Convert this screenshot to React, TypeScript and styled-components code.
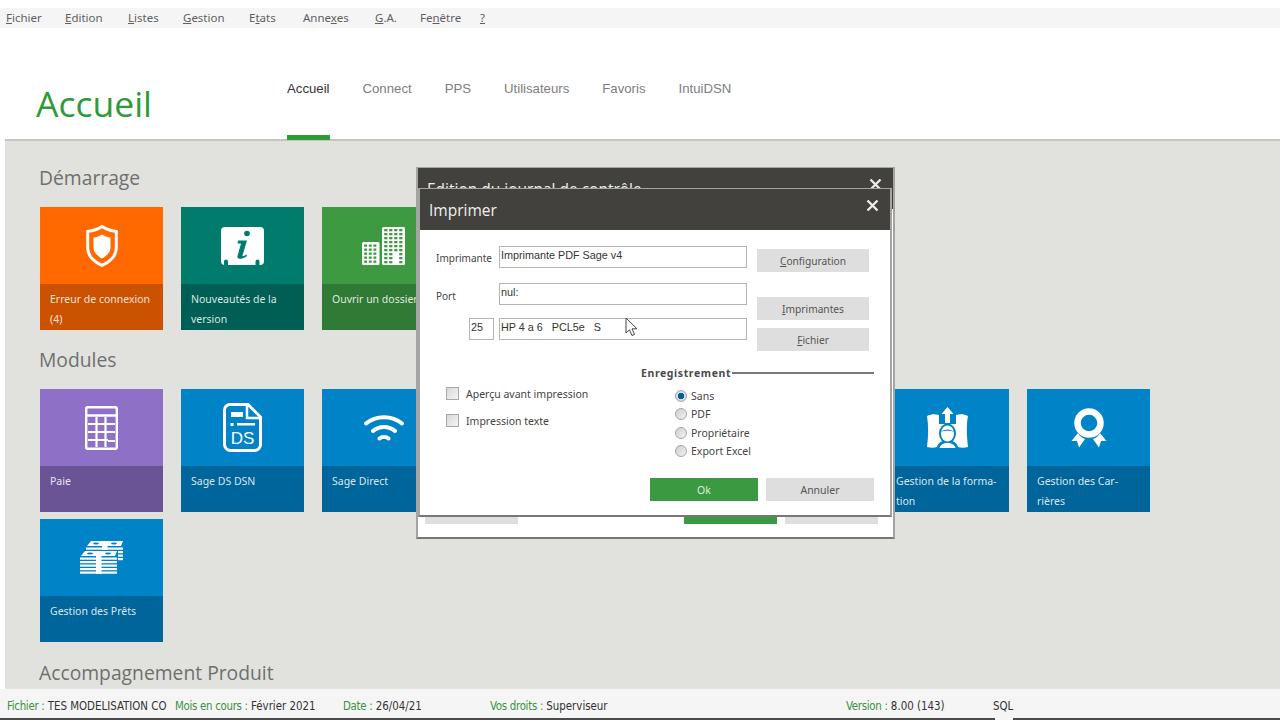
import React from 'react';
import styled, { createGlobalStyle } from 'styled-components';

const GlobalStyle = createGlobalStyle`
  html, body { margin: 0; padding: 0; background: #fff; }
  body { font-family: "Noto Sans", "Liberation Sans", sans-serif; }
  * { box-sizing: border-box; }
`;

const uiFont = '"Noto Sans", "Liberation Sans", sans-serif';
const navFont = '"Liberation Sans", Arial, sans-serif';
const titleFont = '"Open Sans", "Noto Sans", sans-serif';

const orange = { $bg: '#ff6900', $shade: '#cb5200' };
const teal = { $bg: '#007b6c', $shade: '#005f55' };
const green = { $bg: '#3d9a41', $shade: '#2f7a34' };
const purple = { $bg: '#8e70c6', $shade: '#6b5496' };
const blue = { $bg: '#0083c7', $shade: '#00659b' };

const Page = styled.div`
  position: relative;
  width: 1280px;
  height: 720px;
  overflow: hidden;
  display: flex;
  flex-direction: column;
  background: #fff;
  padding-top: 8px;
`;

const MenuBar = styled.nav`
  height: 20px;
  flex: none;
  display: flex;
  align-items: center;
  padding: 0 0 2px 6px;
  background: #f5f5f5;
  font-family: ${uiFont};
  font-size: 11.5px;
  color: #5f5f5f;
`;

const MenuItem = styled.span<{ $width: number }>`
  width: ${(p) => p.$width}px;
  flex: none;
`;

const Header = styled.header`
  height: 113px;
  flex: none;
  display: flex;
  margin-left: 5px;
  border-bottom: 2px solid #c4c5c1;
`;

const Brand = styled.h1`
  width: 282px;
  margin: 0;
  padding: 55px 0 0 31px;
  font-family: ${titleFont};
  font-size: 35.5px;
  line-height: 40px;
  font-weight: 400;
  color: #2f9a38;
`;

const Tabs = styled.div`
  display: flex;
  gap: 33px;
`;

const Tab = styled.div<{ $active?: boolean }>`
  height: 112px;
  padding-top: 52px;
  margin-bottom: -1px;
  font-family: ${navFont};
  font-size: 13.2px;
  line-height: 18px;
  color: ${(p) => (p.$active ? '#333' : '#7d7d7d')};
  border-bottom: 5px solid ${(p) => (p.$active ? '#2f9a38' : 'transparent')};
`;

const Main = styled.main`
  flex: 1;
  min-height: 0;
  margin-left: 5px;
  padding-left: 35px;
  overflow: hidden;
  background: #e1e2de;
`;

const SectionTitle = styled.h2<{ $top: number }>`
  margin: ${(p) => p.$top}px 0 15px -1px;
  height: 28px;
  font-family: ${titleFont};
  font-size: 19.3px;
  line-height: 28px;
  font-weight: 400;
  color: #6f706e;
`;

const TileGrid = styled.div`
  display: grid;
  grid-template-columns: repeat(8, 123px);
  grid-auto-rows: 123px;
  column-gap: 18px;
  row-gap: 7px;
`;

const TileBox = styled.div<{ $bg: string; $shade: string }>`
  display: flex;
  flex-direction: column;
  background: ${(p) => p.$bg};
  --shade: ${(p) => p.$shade};
`;

const TileIcon = styled.div`
  height: 77px;
  flex: none;
  display: flex;
  align-items: center;
  justify-content: center;
`;

const TileCaption = styled.div`
  flex: 1;
  padding: 5px 0 0 10px;
  background: var(--shade);
  font-family: ${uiFont};
  font-size: 10.5px;
  line-height: 20px;
  color: rgba(255, 255, 255, 0.86);
  white-space: pre-line;
`;

const StatusBar = styled.footer`
  height: 31px;
  flex: none;
  display: flex;
  align-items: center;
  padding: 2px 0 0 7px;
  background: #f5f5f5;
  font-family: "DejaVu Sans Condensed", "Liberation Sans", sans-serif;
  font-size: 11.4px;
  color: #333;
`;

const StatusItem = styled.div<{ $width: number }>`
  width: ${(p) => p.$width}px;
  flex: none;
  white-space: nowrap;
`;

const StatusKey = styled.span`
  color: #3f8f46;
  letter-spacing: -0.3px;
`;

const TaskLine = styled.div`
  height: 2px;
  flex: none;
  display: flex;
  justify-content: space-between;
  margin-top: -2px;
  position: relative;
`;

const TaskSegment = styled.div<{ $width: number }>`
  width: ${(p) => p.$width}px;
  background: #4a4a4a;
`;

const Dialog = styled.div<{ $left: number; $top: number; $width: number; $height: number }>`
  position: absolute;
  left: ${(p) => p.$left}px;
  top: ${(p) => p.$top}px;
  width: ${(p) => p.$width}px;
  height: ${(p) => p.$height}px;
  display: flex;
  flex-direction: column;
  background: #fff;
  border: 2px solid #a4a4a2;
  border-top-width: 1px;
  border-bottom-color: #777775;
`;

const TitleBar = styled.div`
  height: 41px;
  flex: none;
  display: flex;
  align-items: center;
  justify-content: space-between;
  padding: 0 11px 0 9px;
  background: #43413d;
  font-family: ${titleFont};
  font-size: 15.5px;
  color: #f0f0ee;
`;

const CloseGlyph = styled.svg`
  width: 13px;
  height: 13px;
  margin-bottom: 8px;
`;

const BackFooter = styled.div`
  margin-top: auto;
  display: flex;
  padding: 0 15px 13px 7px;
  gap: 8px;
`;

const BackButton = styled.div<{ $primary?: boolean; $push?: boolean }>`
  width: 93px;
  height: 23px;
  margin-left: ${(p) => (p.$push ? 'auto' : '0')};
  background: ${(p) => (p.$primary ? '#3a9a41' : '#dedede')};
`;

const DialogBody = styled.div`
  flex: 1;
  padding: 16px 16px 0;
  font-family: ${uiFont};
  font-size: 10.5px;
  color: #444;
`;

const TopForm = styled.div`
  display: flex;
  height: 105px;
`;

const Fields = styled.div`
  width: 311px;
  display: flex;
  flex-direction: column;
`;

const FieldRow = styled.div<{ $gap?: number; $indent?: number }>`
  display: flex;
  gap: 5px;
  align-items: flex-start;
  margin-top: ${(p) => p.$gap ?? 0}px;
  padding-left: ${(p) => p.$indent ?? 0}px;
`;

const FieldLabel = styled.div<{ $drop: number }>`
  width: 58px;
  padding-top: ${(p) => p.$drop}px;
  font-size: 10px;
  line-height: 14px;
`;

const Input = styled.div<{ $width?: number }>`
  width: ${(p) => p.$width ?? 248}px;
  height: 22px;
  padding: 1px 1px;
  background: #fff;
  border: 1px solid #b4b4b4;
  font-family: ${navFont};
  font-size: 10.8px;
  line-height: 14px;
  color: #333;
  white-space: pre;
`;

const SideButtons = styled.div`
  margin-left: 10px;
  width: 112px;
  padding-top: 3px;
  display: flex;
  flex-direction: column;
`;

const GreyButton = styled.div<{ $gap?: number }>`
  height: 23px;
  margin-top: ${(p) => p.$gap ?? 0}px;
  display: flex;
  align-items: center;
  justify-content: center;
  background: #dedede;
  color: #555;
  font-size: 10.2px;
`;

const Lower = styled.div`
  display: flex;
  margin-top: 15px;
`;

const OptionsColumn = styled.div`
  width: 205px;
  padding: 21px 0 0 10px;
  display: flex;
  flex-direction: column;
  gap: 14px;
`;

const CheckRow = styled.div`
  display: flex;
  align-items: center;
  gap: 7px;
  height: 13px;
  font-size: 10.5px;
`;

const CheckBox = styled.span`
  width: 13px;
  height: 13px;
  flex: none;
  border: 1px solid #a8a8a8;
  background: linear-gradient(135deg, #d8d8d8, #f4f4f4);
`;

const SaveColumn = styled.div`
  width: 233px;
`;

const Legend = styled.div`
  display: flex;
  align-items: center;
  gap: 1px;
  height: 14px;
  font-size: 10.5px;
  font-weight: 700;
  letter-spacing: 0.6px;
  color: #4a4a4a;
  &::after {
    content: '';
    flex: 1;
    height: 1.5px;
    background: #777;
  }
`;

const RadioGroup = styled.div`
  margin: 7px 0 0 34px;
`;

const RadioRow = styled.div`
  height: 18.33px;
  display: flex;
  align-items: center;
  gap: 4px;
  font-size: 10.5px;
`;

const RadioDot = styled.span<{ $on?: boolean }>`
  width: 12px;
  height: 12px;
  flex: none;
  border-radius: 50%;
  border: 1px solid #a6a6a6;
  background: ${(p) =>
    p.$on
      ? 'radial-gradient(circle, #0b5f8c 0 3px, #cfe0ea 3.5px)'
      : 'linear-gradient(135deg, #cfcfcf, #f2f2f2)'};
`;

const Actions = styled.div`
  display: flex;
  justify-content: flex-end;
  gap: 8px;
  margin-top: 18px;
`;

const ActionButton = styled.div<{ $primary?: boolean }>`
  width: 108px;
  height: 23px;
  display: flex;
  align-items: center;
  justify-content: center;
  background: ${(p) => (p.$primary ? '#3a9a41' : '#dedede')};
  color: ${(p) => (p.$primary ? '#d9efd9' : '#555')};
  font-size: 10.5px;
`;

const Pointer = styled.svg`
  position: absolute;
  left: 625px;
  top: 317px;
  width: 14px;
  height: 20px;
`;

const ShieldIcon = () => (
  <svg width="32" height="42" viewBox="0 0 32 42">
    <path d="M16 1.6C11.5 4.6 6.500 6 1.700 6.500V23C1.700 31.500 9 37.500 16 40.400C23 37.500 30.300 31.500 30.300 23V6.500C25.500 6 20.500 4.600 16 1.600Z" fill="none" stroke="#fff" strokeWidth="3" />
    <path d="M16 9.500C13.500 11 10.500 12.200 7.500 12.600V22.500C7.500 27.500 12 31.500 16 33.500C20 31.500 24.500 27.500 24.500 22.500V12.600C21.500 12.200 18.500 11 16 9.500Z" fill="#fff" />
  </svg>
);

const InfoIcon = () => (
  <svg width="43" height="38" viewBox="0 0 43 38">
    <rect width="43" height="38" rx="4" fill="#fff" />
    <circle cx="26" cy="6.500" r="2.800" fill="#007b6c" />
    <path d="M17 13.500H26L21.500 28.500C21.300 29.500 22.500 29.500 25.500 27.500L26 29C22 32 15.500 33.500 16.500 29L20 16.500H16.500Z" fill="#007b6c" />
    <path d="M3 38V34.500a2 2 0 0 1 4 0V38ZM34.500 38V34.500a2 2 0 0 1 4 0V38Z" fill="#007b6c" />
  </svg>
);

const BuildingsIcon = () => {
  const small: React.ReactElement[] = [];
  const big: React.ReactElement[] = [];
  for (let r = 0; r < 5; r++) {
    for (let c = 0; c < 3; c++) {
      small.push(<rect key={`${r}-${c}`} x={2.2 + c * 4.6} y={17.5 + r * 4} width="2.900" height="2.300" fill="#3d9a41" />);
    }
  }
  for (let r = 0; r < 9; r++) {
    for (let c = 0; c < 4; c++) {
      if (r > 5 && c > 1 && c < 3) continue;
      big.push(<rect key={`${r}-${c}`} x={22.2 + c * 5} y={2 + r * 4} width="3.200" height="2.300" fill="#3d9a41" />);
    }
  }
  return (
    <svg width="43" height="38" viewBox="0 0 43 38">
      <rect x="0" y="15" width="17.500" height="23" rx="1.500" fill="#fff" />
      <rect x="20" y="0" width="23" height="38" rx="1.500" fill="#fff" />
      {small}
      {big}
    </svg>
  );
};

const CalcIcon = () => (
  <svg width="33" height="44" viewBox="0 0 33 44">
    <rect x="1.200" y="1.200" width="30.600" height="41.600" rx="1.500" fill="none" stroke="#fff" strokeWidth="2.400" />
    <path d="M1 9.500H32" stroke="#fff" strokeWidth="2.500" />
    <path d="M3 18H30M3 26H30M3 34H23M11.500 11V41M20.500 11V41M23 35H30" stroke="#fff" strokeWidth="2.200" fill="none" />
  </svg>
);

const DsIcon = () => (
  <svg width="39" height="49" viewBox="0 0 39 49">
    <path d="M7 1.500H25L37.500 14V41.500A6 6 0 0 1 31.500 47.500H7.500A6 6 0 0 1 1.500 41.500V7A5.500 5.500 0 0 1 7 1.500Z" fill="none" stroke="#fff" strokeWidth="3" />
    <path d="M24 2V15H37" fill="none" stroke="#fff" strokeWidth="2.500" />
    <rect x="8" y="9" width="12" height="5" fill="#fff" />
    <rect x="7.500" y="20" width="3" height="3" fill="#fff" />
    <rect x="14" y="20" width="18" height="2.500" fill="#fff" />
    <text x="19.500" y="41" textAnchor="middle" fontFamily="Liberation Sans, sans-serif" fontSize="17" fill="#fff">DS</text>
  </svg>
);

const WifiIcon = () => (
  <svg width="40" height="27" viewBox="0 0 40 27">
    <path d="M2 9.500C12 1 28 1 38 9.500M9 17C15 11.500 25 11.500 31 17M15.500 24.500C18 22.500 22 22.500 24.500 24.500" fill="none" stroke="#fff" strokeWidth="4" strokeLinecap="round" />
  </svg>
);

const FormationIcon = () => (
  <svg width="41" height="41" viewBox="0 0 41 41">
    <path d="M0 9C4 7 8 7 12 8V17H29V8C33 7 37 7 41 9C39.500 16 39.500 26 41 40C37 41 34 41 31 40C30 36 26 33 20.500 33C15 33 11 36 10 40C7 41 4 41 0 40C1.500 28 1.500 18 0 9Z" fill="#fff" />
    <path d="M20.500 0L26.500 7H23V16H18V7H14.500Z" fill="#fff" />
    <ellipse cx="20.500" cy="26.500" rx="8.500" ry="10" fill="#0083c7" />
    <ellipse cx="20.500" cy="26.500" rx="6.500" ry="8" fill="#fff" />
    <path d="M14 25C16 21.500 25 21.500 27 25C25 23.300 16 23.300 14 25Z" fill="#0083c7" />
    <path d="M12.500 41C13.500 37.500 16.500 36 20.500 36C24.500 36 27.500 37.500 28.500 41Z" fill="#fff" />
  </svg>
);

const RosetteIcon = () => (
  <svg width="36" height="40" viewBox="0 0 36 40">
    <circle cx="18" cy="15" r="11.500" fill="none" stroke="#fff" strokeWidth="6.500" />
    <path d="M7 25L0.500 33L6 33L8 39.500L14 31C11 30 8.500 28 7 25Z" fill="#fff" />
    <path d="M29 25L35.500 33L30 33L28 39.500L22 31C25 30 27.500 28 29 25Z" fill="#fff" />
  </svg>
);

const MoneyIcon = () => {
  const stack = (x: number, y: number, rows: number, key: string) => (
    <g key={key}>
      <path d={`M${x + 5} ${y}H${x + 37}L${x + 35} ${y + 5}H${x + 1}Z`} fill="#fff" />
      <ellipse cx={x + 10} cy={y + 2.500} rx="3" ry="1.100" fill="#0083c7" />
      <ellipse cx={x + 28} cy={y + 2.500} rx="3" ry="1.100" fill="#0083c7" />
      {Array.from({ length: rows }).map((_, i) => (
        <rect key={i} x={x} y={y + 6.500 + i * 3.500} width="37" height="2.200" fill="#fff" />
      ))}
      <rect x={x + 16} y={y} width="5.500" height={6.500 + rows * 3.500} fill="#fff" />
    </g>
  );
  return (
    <svg width="44" height="33" viewBox="0 0 44 33">
      {stack(6, 0, 4, 'back')}
      <rect x="0" y="9" width="38" height="24" fill="#0083c7" />
      {stack(0, 10, 6, 'front')}
    </svg>
  );
};

const Tile = ({ tone, icon, label }: { tone: { $bg: string; $shade: string }; icon?: React.ReactNode; label?: string }) => (
  <TileBox {...tone}>
    <TileIcon>{icon}</TileIcon>
    <TileCaption>{label}</TileCaption>
  </TileBox>
);

const Close = () => (
  <CloseGlyph viewBox="0 0 13 13">
    <path d="M1.500 1.500L11.500 11.500M11.500 1.500L1.500 11.500" stroke="#ececec" strokeWidth="2.400" />
  </CloseGlyph>
);

export default function App() {
  return (
    <Page>
      <GlobalStyle />
      <MenuBar>
        <MenuItem $width={59}><u>F</u>ichier</MenuItem>
        <MenuItem $width={63}><u>E</u>dition</MenuItem>
        <MenuItem $width={55}><u>L</u>istes</MenuItem>
        <MenuItem $width={66}><u>G</u>estion</MenuItem>
        <MenuItem $width={54}>E<u>t</u>ats</MenuItem>
        <MenuItem $width={72}>Anne<u>x</u>es</MenuItem>
        <MenuItem $width={45}><u>G</u>.A.</MenuItem>
        <MenuItem $width={60}>Fe<u>n</u>être</MenuItem>
        <MenuItem $width={20}><u>?</u></MenuItem>
      </MenuBar>

      <Header>
        <Brand>Accueil</Brand>
        <Tabs>
          <Tab $active>Accueil</Tab>
          <Tab>Connect</Tab>
          <Tab>PPS</Tab>
          <Tab>Utilisateurs</Tab>
          <Tab>Favoris</Tab>
          <Tab>IntuiDSN</Tab>
        </Tabs>
      </Header>

      <Main>
        <SectionTitle $top={23}>Démarrage</SectionTitle>
        <TileGrid>
          <Tile tone={orange} icon={<ShieldIcon />} label={'Erreur de connexion\n(4)'} />
          <Tile tone={teal} icon={<InfoIcon />} label={'Nouveautés de la\nversion'} />
          <Tile tone={green} icon={<BuildingsIcon />} label="Ouvrir un dossier" />
        </TileGrid>

        <SectionTitle $top={16}>Modules</SectionTitle>
        <TileGrid>
          <Tile tone={purple} icon={<CalcIcon />} label="Paie" />
          <Tile tone={blue} icon={<DsIcon />} label="Sage DS DSN" />
          <Tile tone={blue} icon={<WifiIcon />} label="Sage Direct" />
          <Tile tone={blue} />
          <Tile tone={blue} />
          <Tile tone={blue} />
          <Tile tone={blue} icon={<FormationIcon />} label={'Gestion de la forma-\ntion'} />
          <Tile tone={blue} icon={<RosetteIcon />} label={'Gestion des Car-\nrières'} />
          <Tile tone={blue} icon={<MoneyIcon />} label="Gestion des Prêts" />
        </TileGrid>

        <SectionTitle $top={17}>Accompagnement Produit</SectionTitle>
      </Main>

      <StatusBar>
        <StatusItem $width={168}><StatusKey>Fichier :</StatusKey> TES MODELISATION CO</StatusItem>
        <StatusItem $width={168}><StatusKey>Mois en cours :</StatusKey> Février 2021</StatusItem>
        <StatusItem $width={147}><StatusKey>Date :</StatusKey> 26/04/21</StatusItem>
        <StatusItem $width={356}><StatusKey>Vos droits :</StatusKey> Superviseur</StatusItem>
        <StatusItem $width={147}><StatusKey>Version :</StatusKey> 8.00 (143)</StatusItem>
        <StatusItem $width={40}>SQL</StatusItem>
      </StatusBar>
      <TaskLine>
        <TaskSegment $width={995} />
        <TaskSegment $width={267} />
      </TaskLine>

      <Dialog $left={416} $top={167} $width={479} $height={372}>
        <TitleBar>
          <span>Edition du journal de contrôle</span>
          <Close />
        </TitleBar>
        <BackFooter>
          <BackButton />
          <BackButton $primary $push />
          <BackButton />
        </BackFooter>
      </Dialog>

      <Dialog $left={418} $top={188} $width={474} $height={329}>
        <TitleBar>
          <span>Imprimer</span>
          <Close />
        </TitleBar>
        <DialogBody>
          <TopForm>
            <Fields>
              <FieldRow>
                <FieldLabel $drop={5}>Imprimante</FieldLabel>
                <Input>Imprimante PDF Sage v4</Input>
              </FieldRow>
              <FieldRow $gap={15}>
                <FieldLabel $drop={6}>Port</FieldLabel>
                <Input>nul:</Input>
              </FieldRow>
              <FieldRow $gap={13} $indent={33}>
                <Input $width={25}>25</Input>
                <Input>{'HP 4 a 6   PCL5e   S'}</Input>
              </FieldRow>
            </Fields>
            <SideButtons>
              <GreyButton><span><u>C</u>onfiguration</span></GreyButton>
              <GreyButton $gap={25}><span><u>I</u>mprimantes</span></GreyButton>
              <GreyButton $gap={8}><span><u>F</u>ichier</span></GreyButton>
            </SideButtons>
          </TopForm>
          <Lower>
            <OptionsColumn>
              <CheckRow><CheckBox />Aperçu avant impression</CheckRow>
              <CheckRow><CheckBox />Impression texte</CheckRow>
            </OptionsColumn>
            <SaveColumn>
              <Legend>Enregistrement</Legend>
              <RadioGroup>
                <RadioRow><RadioDot $on />Sans</RadioRow>
                <RadioRow><RadioDot />PDF</RadioRow>
                <RadioRow><RadioDot />Propriétaire</RadioRow>
                <RadioRow><RadioDot />Export Excel</RadioRow>
              </RadioGroup>
            </SaveColumn>
          </Lower>
          <Actions>
            <ActionButton $primary>Ok</ActionButton>
            <ActionButton>Annuler</ActionButton>
          </Actions>
        </DialogBody>
      </Dialog>

      <Pointer viewBox="0 0 14 20">
        <path d="M1 1V16L4.500 12.800L7 18.500L9.500 17.400L7 11.800H12Z" fill="#fff" stroke="#444" strokeWidth="1" />
      </Pointer>
    </Page>
  );
}
